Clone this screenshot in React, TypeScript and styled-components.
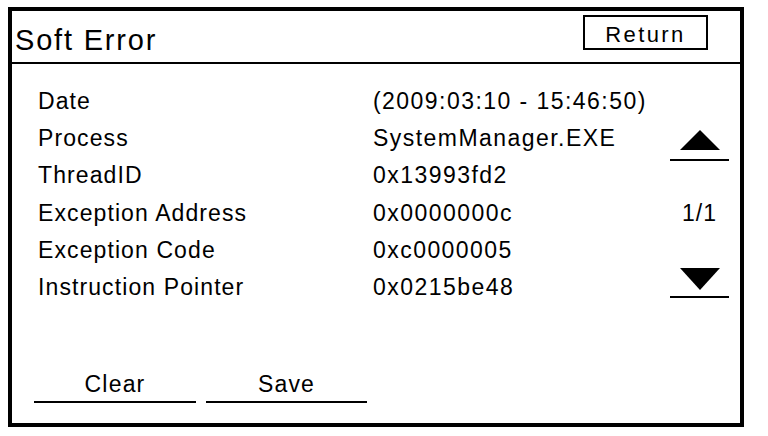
import styled, { createGlobalStyle } from 'styled-components';

const GlobalStyle = createGlobalStyle`
  html, body {
    margin: 0;
    padding: 0;
    background: #fff;
  }

  body {
    font-family: 'Liberation Sans', Arial, sans-serif;
    color: #000;
  }
`;

const details = [
  { label: 'Date', value: '(2009:03:10 - 15:46:50)' },
  { label: 'Process', value: 'SystemManager.EXE' },
  { label: 'ThreadID', value: '0x13993fd2' },
  { label: 'Exception Address', value: '0x0000000c' },
  { label: 'Exception Code', value: '0xc0000005' },
  { label: 'Instruction Pointer', value: '0x0215be48' },
];

function App() {
  return (
    <>
      <GlobalStyle />
      <Frame>
        <Header>
          <Title>Soft Error</Title>
          <ReturnButton type="button">Return</ReturnButton>
        </Header>
        <Body>
          <Details>
            <Table>
              {details.map((row) => (
                <Row key={row.label}>
                  <Label>{row.label}</Label>
                  <Value>{row.value}</Value>
                </Row>
              ))}
            </Table>
            <Actions>
              <ActionButton type="button" $width={162}>
                Clear
              </ActionButton>
              <ActionButton type="button" $width={161}>
                Save
              </ActionButton>
            </Actions>
          </Details>
          <Pager>
            <ArrowButton type="button" aria-label="Page up">
              <svg width="40" height="20" viewBox="0 0 40 20">
                <polygon points="20,0 40,20 0,20" fill="#000" />
              </svg>
            </ArrowButton>
            <PageLabel>1/1</PageLabel>
            <ArrowButton type="button" aria-label="Page down" $down>
              <svg width="40" height="22" viewBox="0 0 40 22">
                <polygon points="0,0 40,0 20,22" fill="#000" />
              </svg>
            </ArrowButton>
          </Pager>
        </Body>
      </Frame>
    </>
  );
}

export default App;

const Frame = styled.div`
  box-sizing: border-box;
  width: 736px;
  height: 420px;
  margin: 7px 0 0 8px;
  border: 4px solid #000;
  display: flex;
  flex-direction: column;
  background: #fff;
`;

const Header = styled.header`
  box-sizing: border-box;
  height: 53px;
  border-bottom: 2px solid #000;
  display: flex;
  align-items: flex-start;
  justify-content: space-between;
  padding: 0 32px 0 3px;
`;

const Title = styled.h1`
  margin: 14px 0 0;
  font-size: 29px;
  font-weight: normal;
  line-height: 30px;
  letter-spacing: 1.8px;
`;

const ReturnButton = styled.button`
  box-sizing: border-box;
  width: 125px;
  height: 35px;
  margin-top: 4px;
  padding: 4px 0 0;
  border: 2px solid #000;
  background: #fff;
  color: #000;
  font-family: inherit;
  font-size: 22px;
  letter-spacing: 2.4px;
  line-height: 1;
  cursor: pointer;
`;

const Body = styled.div`
  flex: 1;
  display: flex;
`;

const Details = styled.div`
  flex: 1;
  display: flex;
  flex-direction: column;
`;

const Table = styled.div`
  display: grid;
  grid-auto-rows: 37.2px;
  padding: 19px 0 0 26px;
`;

const Row = styled.div`
  display: grid;
  grid-template-columns: 335px auto;
  align-items: center;
  font-size: 23px;
  line-height: 1;
`;

const Label = styled.span`
  letter-spacing: 1.1px;
  white-space: nowrap;
`;

const Value = styled.span`
  letter-spacing: 1.45px;
  white-space: nowrap;
`;

const Actions = styled.div`
  margin-top: auto;
  display: flex;
  gap: 10px;
  padding: 0 0 20px 22px;
`;

const ActionButton = styled.button<{ $width: number }>`
  box-sizing: border-box;
  width: ${(p) => p.$width}px;
  padding: 0 0 2px;
  border: none;
  border-bottom: 2px solid #000;
  background: transparent;
  color: #000;
  font-family: inherit;
  font-size: 23px;
  letter-spacing: 1.2px;
  line-height: 30px;
  cursor: pointer;
`;

const Pager = styled.div`
  width: 59px;
  margin-right: 11px;
  padding-top: 66px;
  display: flex;
  flex-direction: column;
  align-items: stretch;
`;

const ArrowButton = styled.button<{ $down?: boolean }>`
  display: flex;
  justify-content: center;
  margin-top: ${(p) => (p.$down ? '42px' : '0')};
  padding: 0 0 ${(p) => (p.$down ? '6px' : '9px')};
  border: none;
  border-bottom: 2px solid #000;
  background: transparent;
  cursor: pointer;

  svg {
    display: block;
  }
`;

const PageLabel = styled.div`
  margin-top: 39px;
  font-size: 23px;
  line-height: 26px;
  letter-spacing: 1px;
  text-align: center;
`;
